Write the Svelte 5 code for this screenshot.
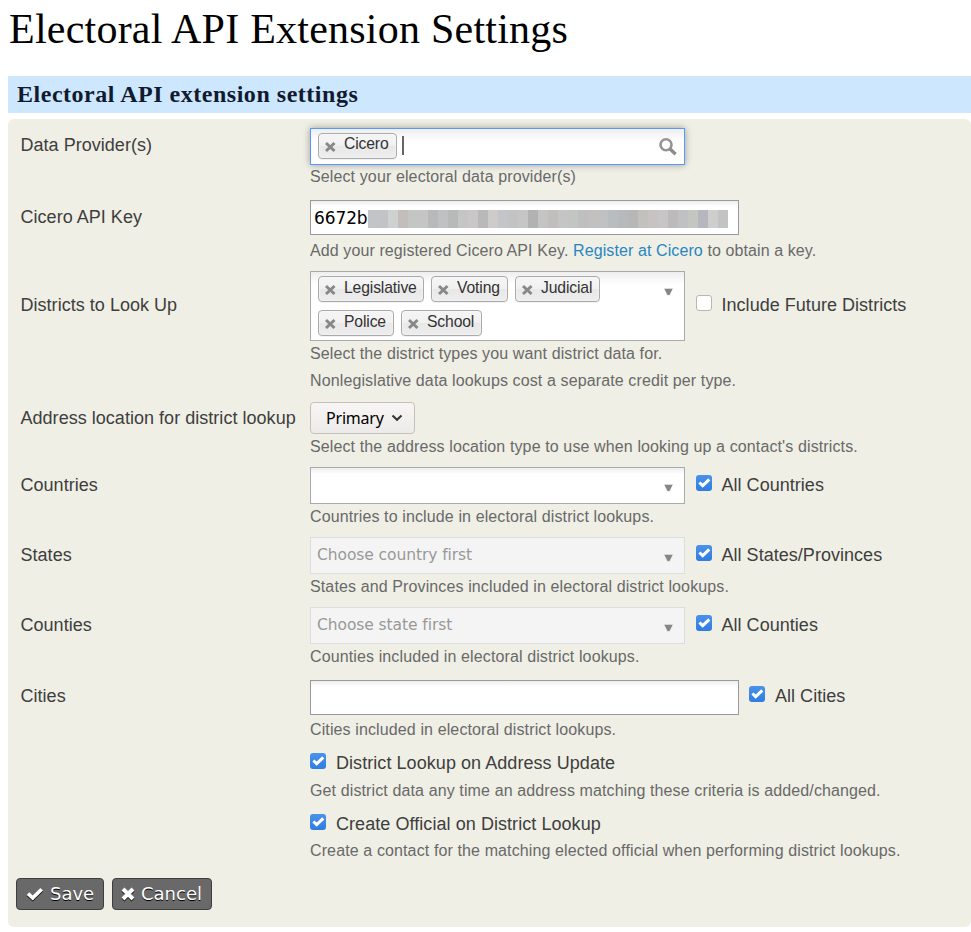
<script>
  const mosaic = ['#c2c4c5','#c2c3c6','#cfd1d0','#c4beba','#c3c6c3','#c5c5c5','#b8b9b9','#bec2c2','#b7bab9','#c5c5c5','#c9c7c8','#b9b9b9','#cecbc8','#c4c5ca','#c1c4c2','#c6c6c7','#b2b2b2','#c4c4c4','#c0bfbe','#c5c5c6','#c3c5c2','#bfbfbf','#c3c1c0','#c0c1c2','#b8bdc0','#b8b9bb','#b7b7b8','#c2c1be','#c6c3c2','#c7c5c5','#bdbbba','#bfc1c4','#c4c6c2','#b7b6bf','#cecece','#c3c3c3'];
  const rows = [
    { id: 'provider', label: 'Data Provider(s)', kind: 'multi', chips: [['Cicero', 79]], hints: ['Select your electoral data provider(s)'], height: 72, lead: 6 },
    { id: 'key', label: 'Cicero API Key', kind: 'text', value: '6672b', hints: [], height: 71, lead: 6 },
    { id: 'districts', label: 'Districts to Look Up', kind: 'multi', chips: [['Legislative', 106], ['Voting', 77], ['Judicial', 85], ['Police', 76], ['School', 81]], side: 'Include Future Districts', hints: ['Select the district types you want district data for.', 'Nonlegislative data lookups cost a separate credit per type.'], height: 131, lead: 23 },
    { id: 'location', label: 'Address location for district lookup', kind: 'select', hints: ["Select the address location type to use when looking up a contact's districts."], height: 65, lead: 5 },
    { id: 'countries', label: 'Countries', kind: 'single', side: 'All Countries', checked: true, hints: ['Countries to include in electoral district lookups.'], height: 70, lead: 7 },
    { id: 'states', label: 'States', kind: 'single', placeholder: 'Choose country first', side: 'All States/Provinces', checked: true, hints: ['States and Provinces included in electoral district lookups.'], height: 70, lead: 7 },
    { id: 'counties', label: 'Counties', kind: 'single', placeholder: 'Choose state first', side: 'All Counties', checked: true, hints: ['Counties included in electoral district lookups.'], height: 73, lead: 7 },
    { id: 'cities', label: 'Cities', kind: 'text', side: 'All Cities', checked: true, hints: ['Cities included in electoral district lookups.'], height: 72, lead: 5 }
  ];
  const options = [
    { label: 'District Lookup on Address Update', hint: 'Get district data any time an address matching these criteria is added/changed.' },
    { label: 'Create Official on District Lookup', hint: 'Create a contact for the matching elected official when performing district lookups.' }
  ];
</script>

{#snippet checkbox(checked)}
  <span class="check" class:on={checked}>
    {#if checked}<svg width="16" height="16" viewBox="0 0 16 16"><path d="M3.4 7.5 6.7 10.7 13.3 4.3" fill="none" stroke="#fff" stroke-width="3" /></svg>{/if}
  </span>
{/snippet}

{#snippet arrow()}
  <svg class="arrow" width="9" height="8" viewBox="0 0 9 8"><path d="M0 0H9L6 7.5H3Z" fill="#8b8b8b" opacity=".3" /><path d="M.5 1H8.5L5.3 7H3.7Z" fill="#858585" /></svg>
{/snippet}

<main>
  <h1>Electoral API Extension Settings</h1>
  <h3>Electoral API extension settings</h3>
  <form class="panel">
    {#each rows as row (row.id)}
      <div class="row" style:height="{row.height}px">
        <div class="label" style:padding-top="{row.lead}px">{row.label}</div>
        <div class="content">
          <div class="controls">
            {#if row.kind === 'multi'}
              <div class="multi" class:active={row.id === 'provider'}>
                <div class="chips">
                  {#each row.chips as [name, width]}
                    <span class="chip" style:width="{width}px">
                      <svg width="12" height="12" viewBox="0 0 12 12"><path d="M1 2 9.5 10M9.5 2 1 10" stroke="#888" stroke-width="3" /></svg><span>{name}</span>
                    </span>
                  {/each}
                  {#if row.id === 'provider'}<i class="caret"></i>{/if}
                </div>
                {#if row.id === 'provider'}
                  <svg class="search" width="18" height="18" viewBox="0 0 18 18"><circle cx="7" cy="6.8" r="5.5" fill="none" stroke="#949494" stroke-width="2.6" /><path d="m10.8 10.8 5.8 5.5" stroke="#8c8c8c" stroke-width="3.4" /></svg>
                {:else}{@render arrow()}{/if}
              </div>
            {:else if row.kind === 'text'}
              <div class="text">
                {#if row.value}
                  <span>{row.value}</span>
                  <div class="mosaic">{#each mosaic as color}<i style:background={color}></i>{/each}</div>
                {/if}
              </div>
            {:else if row.kind === 'select'}
              <div class="select">Primary<svg width="12" height="8" viewBox="0 0 12 8"><path d="m1.5 1.5 4.5 4.3 4.5-4.3" fill="none" stroke="#333" stroke-width="2" /></svg></div>
            {:else}
              <div class="single" class:disabled={row.placeholder}><span>{row.placeholder ?? ''}</span>{@render arrow()}</div>
            {/if}
            {#if row.side}
              <div class="side" style:padding-top="{row.lead}px">{@render checkbox(row.checked)}<span>{row.side}</span></div>
            {/if}
          </div>
          {#each row.hints as hint}<p class="hint {row.id}">{hint}</p>{/each}
          {#if row.id === 'key'}<p class="hint key">Add your registered Cicero API Key. <a href="#register">Register at Cicero</a> to obtain a key.</p>{/if}
        </div>
      </div>
    {/each}
    {#each options as option, i}
      <div class="option" class:last={i === 1}>
        <div class="side">{@render checkbox(true)}<span>{option.label}</span></div>
        <p class="hint">{option.hint}</p>
      </div>
    {/each}
    <div class="buttons">
      <span class="button save"><svg width="18" height="14" viewBox="0 0 18 14"><path d="M2 6.7 6.7 11 15.7 2.2" fill="none" stroke="#fff" stroke-width="3.7" /></svg>Save</span>
      <span class="button cancel"><svg width="14" height="14" viewBox="0 0 14 14"><path d="m2 2 10 10M12 2 2 12" stroke="#fff" stroke-width="4" /></svg>Cancel</span>
    </div>
  </form>
</main>

<style>
  :global(body) { background: #fff; }
  * { box-sizing: border-box; }
  main { width: 971px; height: 932px; padding: 8px 0 0 8px; font-family: "Liberation Sans", sans-serif; color: #3e3e3e; overflow: hidden; }
  h1, h3 { margin: 0; font-family: "Liberation Serif", serif; white-space: nowrap; }
  h1 { height: 68px; padding-left: 1px; font-size: 42px; line-height: 42px; font-weight: 400; color: #000; letter-spacing: .23px; }
  h3 { height: 37px; padding-left: 9px; background: #cde8fe; color: #111a2e; font-size: 24px; line-height: 37px; letter-spacing: .52px; }
  .panel { width: 963px; height: 808px; margin-top: 6px; padding-top: 9px; border-radius: 6px; background: #efefe5; }
  .row { display: grid; grid-template-columns: 289px 1fr; padding-left: 13px; }
  .label, .side { font-size: 18px; line-height: 22px; white-space: nowrap; letter-spacing: .03px; }
  .label { margin-left: -.5px; }
  .controls { display: flex; align-items: flex-start; }
  .multi { width: 375px; min-height: 37px; display: flex; justify-content: space-between; border: 1px solid #aaa; background: linear-gradient(#eee, #fff 12px); }
  .multi.active { border-color: #5897fb; box-shadow: 0 0 7px rgba(0,0,0,.35); }
  .chips { display: flex; flex-wrap: wrap; align-content: flex-start; gap: 8px 7px; padding: 4px 0 4px 7px; width: 330px; }
  .chip { height: 26px; display: flex; align-items: center; padding-left: 6px; border: 1px solid #aaa; border-radius: 4px; background: linear-gradient(#f4f4f4 20%, #f0f0f0 50%, #e8e8e8 52%, #eee); box-shadow: inset 0 0 2px #fff, 0 1px 0 rgba(0,0,0,.05); font-size: 15.7px; line-height: 20px; letter-spacing: -.13px; color: #333; }
  .chip svg { margin: 2px 7px 0 0; }
  .chip span { margin-bottom: 3px; }
  .active .chip span { margin-bottom: 4px; }
  .caret { width: 2px; height: 19px; margin: 3px 0 0 -2px; background: #666; }
  .search { margin: 9px 7px 0 0; }
  .arrow { margin: 16px 11px 0 0; }
  .text { width: 429px; height: 35px; display: flex; align-items: center; padding-left: 3px; border: 1px solid #999; background: linear-gradient(#eee, #fff 6px); font: 17px "DejaVu Sans", sans-serif; letter-spacing: -.1px; color: #000; }
  .mosaic { display: flex; width: 360px; height: 18px; margin-top: 2px; }
  .mosaic i { flex: 1; }
  .select { width: 105px; height: 32px; display: flex; align-items: center; padding-left: 15px; border: 1px solid #c5bfbc; border-radius: 4px; background: linear-gradient(#f7f6f5, #edebe9); font: 16px "Noto Sans", sans-serif; letter-spacing: -.2px; color: #000; }
  .select svg { margin-left: 7px; }
  .single { width: 375px; height: 37px; display: flex; justify-content: space-between; padding-left: 6px; border: 1px solid #aaa; background: linear-gradient(#eee, #fff 6px); font: 15.5px/34px "DejaVu Sans", sans-serif; letter-spacing: -.08px; color: #999; }
  .single.disabled { background: #f4f4f4; border-color: #ddd; }
  .side { display: flex; margin-left: 11px; }
  .text + .side { margin-left: 10px; }
  .side > span:last-child { margin-left: 9.5px; }
  .text + .side > span:last-child { margin-left: 10px; }
  .check { width: 16px; height: 16px; margin-top: 1px; border: 1px solid #bbb5ae; border-radius: 3px; background: #fff; }
  .check.on { border: 0; background: linear-gradient(#4a92ea, #2f7de1); }
  .check svg { display: block; }
  .hint { margin: 0; height: 27px; padding-top: 2px; font-size: 16px; line-height: 22px; letter-spacing: .12px; color: #696969; white-space: nowrap; }
  .hint.provider { padding-top: 1px; }
  .hint.key { padding-top: 5px; letter-spacing: .1px; }
  .hint.cities { padding-top: 4px; }
  a { color: #2786c2; text-decoration: none; }
  .option { height: 61px; padding-left: 302px; }
  .option .side { margin-left: 0; height: 27px; letter-spacing: .06px; }
  .option .side > span:last-child { margin-left: 10px; }
  .option .hint { padding-top: 1px; }
  .option.last .hint { padding-top: 0; }
  .buttons { display: flex; gap: 8px; padding: 4px 0 0 8px; }
  .button { height: 32px; display: flex; align-items: center; padding-bottom: 1px; border: 1px solid #3e3e3e; border-radius: 4px; background: #696969; color: #fff; font: 18px "DejaVu Sans", sans-serif; text-shadow: 0 1px 0 #000; }
  .button svg { filter: drop-shadow(0 1px 0 #000); }
  .save { width: 88px; padding-left: 9px; }
  .save svg { margin-right: 6px; }
  .cancel { width: 100px; padding-left: 8px; }
  .cancel svg { margin-right: 6px; }
</style>
